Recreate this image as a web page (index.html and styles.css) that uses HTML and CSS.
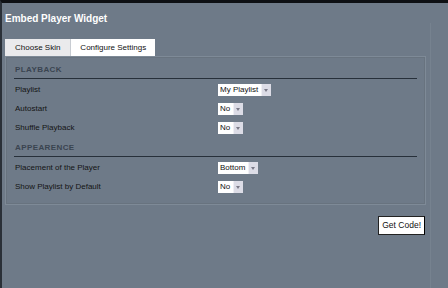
FILE: index.html
```html
<!DOCTYPE html>
<html>
<head>
<meta charset="utf-8">
<link rel="stylesheet" href="styles.css">
</head>
<body>
<div class="window">
  <div class="main">
    <h1 class="title">Embed Player Widget</h1>
    <div class="tabs">
      <div class="tab">Choose Skin</div>
      <div class="tab active">Configure Settings</div>
    </div>
    <div class="panel">
      <div class="section">PLAYBACK</div>
      <div class="row"><span class="label">Playlist</span><span class="select"><span class="val">My Playlist</span><span class="arrow"></span></span></div>
      <div class="row"><span class="label">Autostart</span><span class="select"><span class="val">No</span><span class="arrow"></span></span></div>
      <div class="row"><span class="label">Shuffle Playback</span><span class="select"><span class="val">No</span><span class="arrow"></span></span></div>
      <div class="section sec2">APPEARENCE</div>
      <div class="row"><span class="label">Placement of the Player</span><span class="select"><span class="val">Bottom</span><span class="arrow"></span></span></div>
      <div class="row"><span class="label">Show Playlist by Default</span><span class="select"><span class="val">No</span><span class="arrow"></span></span></div>
    </div>
    <div class="actions"><button class="btn">Get Code!</button></div>
  </div>
  <div class="stripe"></div>
</div>
</body>
</html>
```
FILE: styles.css
```css
html, body { margin: 0; padding: 0; }
body {
  width: 448px; height: 288px; overflow: hidden;
  background: #6e7a88;
  font-family: "Liberation Sans", Arial, sans-serif;
}
.window {
  display: flex;
  height: 288px;
  box-sizing: border-box;
  border-top: 3px solid #0e1014;
  border-left: 2px solid #2a3038;
}
.main { width: 428px; padding-left: 3px; box-sizing: border-box; }
.stripe { width: 1px; background: #76828f; margin-top: 20px; }
.title {
  margin: 0;
  padding-top: 10px;
  height: 25px;
  box-sizing: border-box;
  font-size: 10px;
  font-weight: bold;
  color: #ffffff;
  line-height: 12px;
}
.tabs { display: flex; margin-top: 11px; }
.tab {
  height: 17px;
  line-height: 17px;
  font-size: 8px;
  color: #111;
  background: #eaeaec;
  padding: 0 10px;
  border-right: 1px solid #c8ccd2;
}
.tab.active { background: #ffffff; padding: 0 9px; border-right: none; }
.panel {
  width: 421px;
  height: 149px;
  box-sizing: border-box;
  border: 1px solid #7e8a97;
  box-shadow: inset 0 0 0 1px #68737f;
  padding: 7px 8px 0 8px;
}
.section {
  font-size: 8px;
  font-weight: bold;
  color: #3a4450;
  letter-spacing: 0.4px;
  padding-left: 1px;
  height: 14px;
  line-height: 12px;
  border-bottom: 1px solid #27303a;
  margin-bottom: 1px;
}
.sec2 { margin-top: 5px; }
.row {
  display: flex;
  align-items: center;
  height: 19px;
  font-size: 8px;
  color: #141414;
}
.label { width: 203px; padding-left: 1px; }
.select {
  display: flex;
  height: 12px;
  background: #fff;
  font-size: 8px;
  line-height: 12px;
  color: #111;
}
.val { padding: 0 3px 0 2px; }
.arrow {
  width: 9px;
  background: #dcdce6;
  border-left: 1px solid #f0f0f4;
  position: relative;
}
.arrow::after {
  content: "";
  position: absolute;
  left: 2px; top: 5px;
  border-left: 2.5px solid transparent;
  border-right: 2.5px solid transparent;
  border-top: 3px solid #7a7a88;
}
.actions { display: flex; justify-content: flex-end; padding-right: 5px; margin-top: 11px; }
.btn {
  font-family: "Liberation Sans", Arial, sans-serif;
  font-size: 8.5px;
  color: #111;
  background: #fff;
  border: 1px solid #222;
  border-right-color: #000;
  padding: 0 3px;
  height: 19px;
  line-height: 17px;
  border-radius: 0;
}
```
